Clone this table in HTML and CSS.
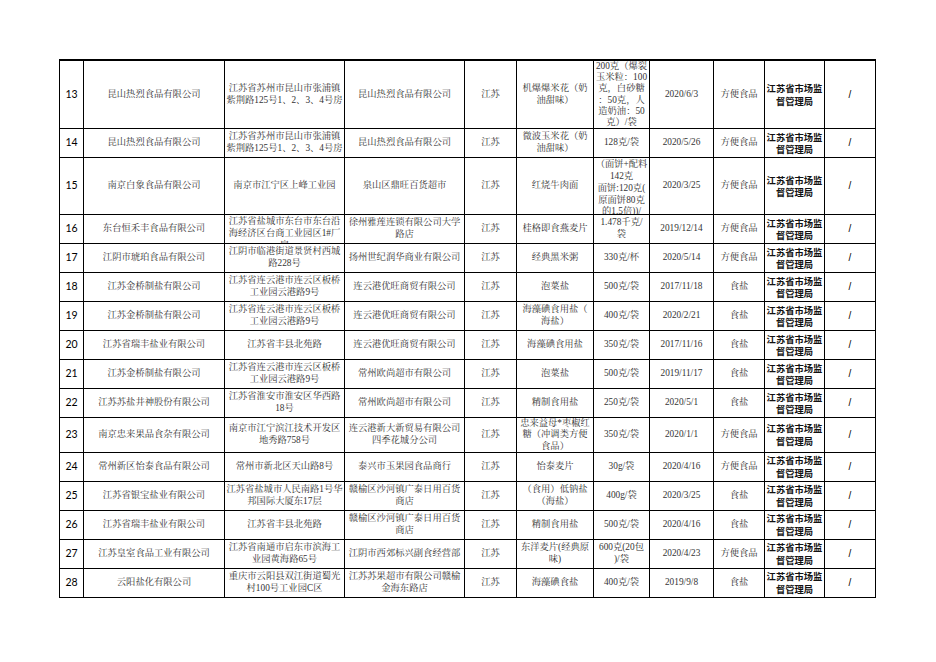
FILE: index.html
```html
<!DOCTYPE html>
<html lang="zh-CN">
<head>
<meta charset="utf-8">
<title>抽检信息</title>
<link rel="stylesheet" href="styles.css">
</head>
<body>
<div class="page">
<table class="grid">
<colgroup>
<col class="c1"><col class="c2"><col class="c3"><col class="c4"><col class="c5"><col class="c6"><col class="c7"><col class="c8"><col class="c9"><col class="c10"><col class="c11">
</colgroup>
<tbody>
<tr class="h68">
<td class="no">13</td><td>昆山热烈食品有限公司</td><td>江苏省苏州市昆山市张浦镇<br>紫荆路125号1、2、3、4号房</td><td>昆山热烈食品有限公司</td><td>江苏</td><td>机爆爆米花（奶<br>油甜味）</td><td class="tight">200克（爆裂<br>玉米粒：100<br>克，白砂糖<br>：50克，人<br>造奶油：50<br>克）/袋</td><td>2020/6/3</td><td>方便食品</td><td class="org">江苏省市场监<br>督管理局</td><td class="sl">/</td>
</tr>
<tr class="h29">
<td class="no">14</td><td>昆山热烈食品有限公司</td><td>江苏省苏州市昆山市张浦镇<br>紫荆路125号1、2、3、4号房</td><td>昆山热烈食品有限公司</td><td>江苏</td><td>微波玉米花（奶<br>油甜味）</td><td>128克/袋</td><td>2020/5/26</td><td>方便食品</td><td class="org">江苏省市场监<br>督管理局</td><td class="sl">/</td>
</tr>
<tr class="h57">
<td class="no">15</td><td>南京白象食品有限公司</td><td>南京市江宁区上峰工业园</td><td>泉山区鼎旺百货超市</td><td>江苏</td><td>红烧牛肉面</td><td class="top"><div class="clip c56">（面饼+配料<br>142克<br>面饼:120克(<br>原面饼80克<br>的1.5倍))/<br>袋</div></td><td>2020/3/25</td><td>方便食品</td><td class="org">江苏省市场监<br>督管理局</td><td class="sl">/</td>
</tr>
<tr class="h29">
<td class="no">16</td><td>东台恒禾丰食品有限公司</td><td class="top"><div class="clip c28">江苏省盐城市东台市东台沿<br>海经济区台商工业园区1#厂<br>房</div></td><td>徐州雅莲连锁有限公司大学<br>路店</td><td>江苏</td><td>桂格即食燕麦片</td><td>1.478千克/<br>袋</td><td>2019/12/14</td><td>方便食品</td><td class="org">江苏省市场监<br>督管理局</td><td class="sl">/</td>
</tr>
<tr class="h29">
<td class="no">17</td><td>江阴市琥珀食品有限公司</td><td>江阴市临港街道景贤村西城<br>路228号</td><td>扬州世纪润华商业有限公司</td><td>江苏</td><td>经典黑米粥</td><td>330克/杯</td><td>2020/5/14</td><td>方便食品</td><td class="org">江苏省市场监<br>督管理局</td><td class="sl">/</td>
</tr>
<tr class="h29">
<td class="no">18</td><td>江苏金桥制盐有限公司</td><td>江苏省连云港市连云区板桥<br>工业园云港路9号</td><td>连云港优旺商贸有限公司</td><td>江苏</td><td>泡菜盐</td><td>500克/袋</td><td>2017/11/18</td><td>食盐</td><td class="org">江苏省市场监<br>督管理局</td><td class="sl">/</td>
</tr>
<tr class="h29">
<td class="no">19</td><td>江苏金桥制盐有限公司</td><td>江苏省连云港市连云区板桥<br>工业园云港路9号</td><td>连云港优旺商贸有限公司</td><td>江苏</td><td>海藻碘食用盐（<br>海盐）</td><td>400克/袋</td><td>2020/2/21</td><td>食盐</td><td class="org">江苏省市场监<br>督管理局</td><td class="sl">/</td>
</tr>
<tr class="h29">
<td class="no">20</td><td>江苏省瑞丰盐业有限公司</td><td>江苏省丰县北苑路</td><td>连云港优旺商贸有限公司</td><td>江苏</td><td>海藻碘食用盐</td><td>350克/袋</td><td>2017/11/16</td><td>食盐</td><td class="org">江苏省市场监<br>督管理局</td><td class="sl">/</td>
</tr>
<tr class="h29">
<td class="no">21</td><td>江苏金桥制盐有限公司</td><td>江苏省连云港市连云区板桥<br>工业园云港路9号</td><td>常州欧尚超市有限公司</td><td>江苏</td><td>泡菜盐</td><td>500克/袋</td><td>2019/11/17</td><td>食盐</td><td class="org">江苏省市场监<br>督管理局</td><td class="sl">/</td>
</tr>
<tr class="h29">
<td class="no">22</td><td>江苏苏盐井神股份有限公司</td><td>江苏省淮安市淮安区华西路<br>18号</td><td>常州欧尚超市有限公司</td><td>江苏</td><td>精制食用盐</td><td>250克/袋</td><td>2020/5/1</td><td>食盐</td><td class="org">江苏省市场监<br>督管理局</td><td class="sl">/</td>
</tr>
<tr class="h34">
<td class="no">23</td><td>南京忠来果品食杂有限公司</td><td>南京市江宁滨江技术开发区<br>地秀路758号</td><td>连云港新大新贸易有限公司<br>四季花城分公司</td><td>江苏</td><td class="tight">忠来益母*枣椒红<br>糖（冲调类方便<br>食品）</td><td>350克/袋</td><td>2020/1/1</td><td>方便食品</td><td class="org">江苏省市场监<br>督管理局</td><td class="sl">/</td>
</tr>
<tr class="h29">
<td class="no">24</td><td>常州新区怡泰食品有限公司</td><td>常州市新北区天山路8号</td><td>泰兴市玉果园食品商行</td><td>江苏</td><td>怡泰麦片</td><td>30g/袋</td><td>2020/4/16</td><td>方便食品</td><td class="org">江苏省市场监<br>督管理局</td><td class="sl">/</td>
</tr>
<tr class="h29">
<td class="no">25</td><td>江苏省银宝盐业有限公司</td><td>江苏省盐城市人民南路1号华<br>邦国际大厦东17层</td><td>赣榆区沙河镇广泰日用百货<br>商店</td><td>江苏</td><td>（食用）低钠盐<br>（海盐）</td><td>400g/袋</td><td>2020/3/25</td><td>食盐</td><td class="org">江苏省市场监<br>督管理局</td><td class="sl">/</td>
</tr>
<tr class="h29">
<td class="no">26</td><td>江苏省瑞丰盐业有限公司</td><td>江苏省丰县北苑路</td><td>赣榆区沙河镇广泰日用百货<br>商店</td><td>江苏</td><td>精制食用盐</td><td>500克/袋</td><td>2020/4/16</td><td>食盐</td><td class="org">江苏省市场监<br>督管理局</td><td class="sl">/</td>
</tr>
<tr class="h29">
<td class="no">27</td><td>江苏皇室食品工业有限公司</td><td>江苏省南通市启东市滨海工<br>业园黄海路65号</td><td>江阴市西郊标兴副食经营部</td><td>江苏</td><td>东洋麦片(经典原<br>味)</td><td>600克(20包<br>)/袋</td><td>2020/4/23</td><td>方便食品</td><td class="org">江苏省市场监<br>督管理局</td><td class="sl">/</td>
</tr>
<tr class="h29">
<td class="no">28</td><td>云阳盐化有限公司</td><td>重庆市云阳县双江街道蜀光<br>村100号工业园C区</td><td>江苏苏果超市有限公司赣榆<br>金海东路店</td><td>江苏</td><td>海藻碘食盐</td><td>400克/袋</td><td>2019/9/8</td><td>食盐</td><td class="org">江苏省市场监<br>督管理局</td><td class="sl">/</td>
</tr>
</tbody>
</table>
</div>
</body>
</html>
```
FILE: styles.css
```css
html, body {
  margin: 0;
  padding: 0;
  background: #fff;
}
.page {
  padding: 59px 0 0 59px;
}
.grid {
  border-collapse: collapse;
  table-layout: fixed;
  width: 817px;
  border-top: 2px solid #000;
}
.grid col.c1 { width: 24px; }
.grid col.c2 { width: 141px; }
.grid col.c3 { width: 120px; }
.grid col.c4 { width: 120px; }
.grid col.c5 { width: 52px; }
.grid col.c6 { width: 77px; }
.grid col.c7 { width: 56px; }
.grid col.c8 { width: 64px; }
.grid col.c9 { width: 51px; }
.grid col.c10 { width: 60px; }
.grid col.c11 { width: 51px; }
.grid td {
  border: 1px solid #000;
  padding: 0;
  text-align: center;
  vertical-align: middle;
  white-space: nowrap;
  overflow: hidden;
  font-family: "Liberation Serif", "Noto Serif CJK SC", "Noto Sans CJK SC", serif;
  font-size: 9.3px;
  line-height: 11.8px;
  color: #333;
}
.grid tr.h68 { height: 68px; }
.grid tr.h29 { height: 29px; }
.grid tr.h57 { height: 57px; }
.grid tr.h34 { height: 34px; }
.grid td.no {
  font-family: "Lato", "Liberation Sans", sans-serif;
  font-size: 10.5px;
  color: #000;
}
.grid td.org {
  font-family: "Noto Sans CJK SC", sans-serif;
  font-weight: 700;
  font-size: 9.3px;
  line-height: 12.7px;
  color: #111;
}
.grid td.sl {
  font-family: "Liberation Sans", sans-serif;
  font-size: 10px;
  color: #000;
}
.grid td.tight {
  line-height: 11.2px;
}
.grid td.top {
  vertical-align: top;
}
.clip {
  overflow: hidden;
  padding-top: 1px;
}
.clip.c56 { height: 55px; }
.clip.c28 { height: 27px; }
```
